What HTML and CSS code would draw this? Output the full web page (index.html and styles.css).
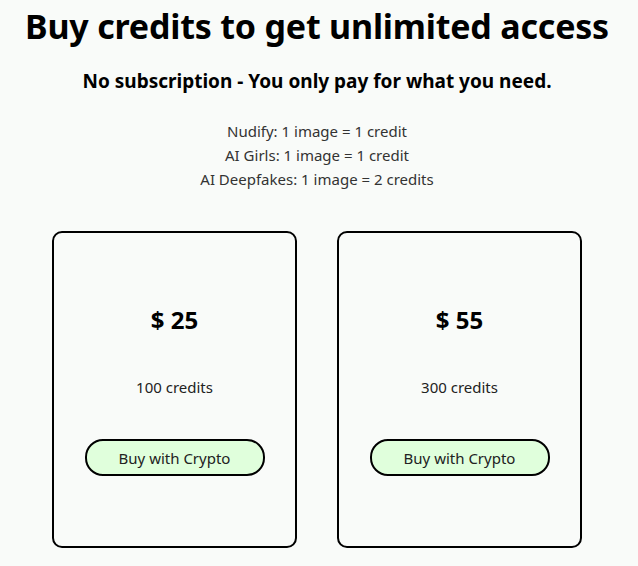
FILE: index.html
```html
<!DOCTYPE html>
<html>
  <head>
    <title>Buy credits</title>
    <meta charset="UTF-8">
    <meta name="viewport" content="width=device-width, initial-scale=1.0">

  <!--CSS-->
    <link rel="stylesheet" href="styles.css">
  </head>

<!--BODY-->
<body>
  <div class="page">

    <!--Header-->
    <h1 class="title">Buy credits to get unlimited access</h1>
    <h3 class="subtitle">No subscription - You only pay for what you need.</h3>

    <!--Prices per tool-->
    <div class="rates">
      <p>Nudify: 1 image = 1 credit</p>
      <p>AI Girls: 1 image = 1 credit</p>
      <p>AI Deepfakes: 1 image = 2 credits</p>
    </div>

    <!--Packs-->
    <div class="packs">
      <div class="card">
        <h2 class="price">$ 25</h2>
        <p class="amount">100 credits</p>
        <button class="buy">Buy with Crypto</button>
      </div>
      <div class="card">
        <h2 class="price">$ 55</h2>
        <p class="amount">300 credits</p>
        <button class="buy">Buy with Crypto</button>
      </div>
    </div>

  </div>
</body>
</html>
```

FILE: styles.css
```css
html, body {
  margin: 0;
  padding: 0;
  font-family: "Noto Sans", "Open Sans", sans-serif;
  background-color: #f9fbf9;
  color: #000;
}

.page {
  width: 634px;
  text-align: center;
}

.title {
  margin: 0;
  padding-top: 4px;
  font-size: 34px;
  line-height: 44px;
  font-weight: 700;
  letter-spacing: -0.2px;
}

.subtitle {
  margin: 20px 0 0 0;
  font-size: 19px;
  line-height: 26px;
  font-weight: 700;
}

.rates {
  margin-top: 25px;
  color: #333;
  font-size: 15px;
  line-height: 24px;
}

.rates p {
  margin: 0;
}

/**Cards*/
.packs {
  display: flex;
  justify-content: center;
  gap: 40px;
  margin-top: 40px;
}

.card {
  width: 245px;
  height: 317px;
  box-sizing: border-box;
  border: 2px solid #000;
  border-radius: 10px;
  display: flex;
  flex-direction: column;
  align-items: center;
  padding-top: 72px;
}

.price {
  margin: 0;
  font-size: 24px;
  line-height: 30px;
  font-weight: 700;
}

.amount {
  margin: 42px 0 0 0;
  font-size: 15px;
  line-height: 20px;
  color: #222;
}

.buy {
  margin-top: 42px;
  width: 180px;
  height: 37px;
  background-color: #e0ffdc;
  border: 2px solid #000;
  border-radius: 18px;
  font-family: inherit;
  font-size: 15px;
  color: #222;
  cursor: pointer;
}
```
